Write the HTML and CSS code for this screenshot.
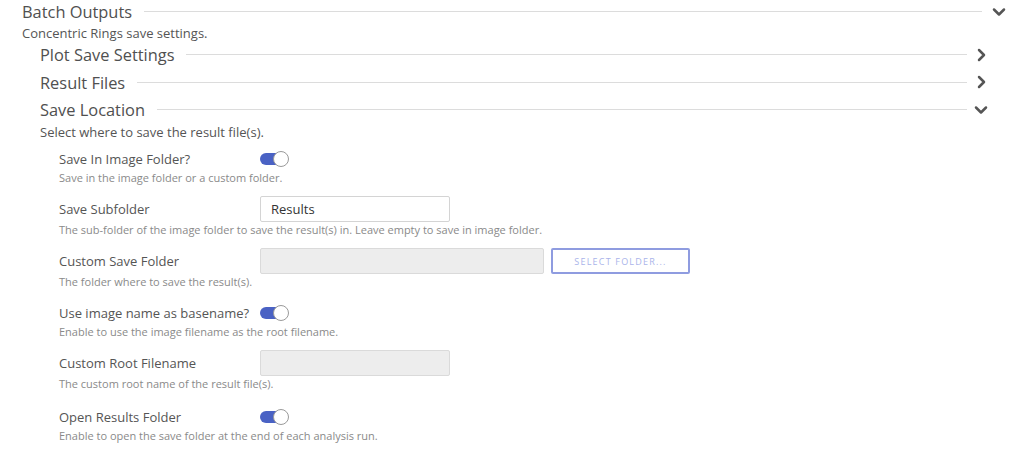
FILE: index.html
```html
<!DOCTYPE html>
<html>
<head>
<meta charset="utf-8">
<link rel="stylesheet" href="styles.css">
</head>
<body>
<div class="panel">
  <div class="header outer">
    <span class="title">Batch Outputs</span>
    <span class="rule"></span>
    <svg class="chev" width="14" height="14" viewBox="0 0 14 14"><path d="M2 4.5 L7 9.5 L12 4.5" fill="none" stroke="#555" stroke-width="2.5" stroke-linecap="round" stroke-linejoin="round"/></svg>
  </div>
  <div class="desc-main">Concentric Rings save settings.</div>
  <div class="inner">
    <div class="header">
      <span class="title">Plot Save Settings</span>
      <span class="rule"></span>
      <svg class="chev" width="14" height="14" viewBox="0 0 14 14"><path d="M5 2 L10 7 L5 12" fill="none" stroke="#555" stroke-width="2.5" stroke-linecap="round" stroke-linejoin="round"/></svg>
    </div>
    <div class="header">
      <span class="title">Result Files</span>
      <span class="rule"></span>
      <svg class="chev" width="14" height="14" viewBox="0 0 14 14"><path d="M5 2 L10 7 L5 12" fill="none" stroke="#555" stroke-width="2.5" stroke-linecap="round" stroke-linejoin="round"/></svg>
    </div>
    <div class="header">
      <span class="title">Save Location</span>
      <span class="rule"></span>
      <svg class="chev" width="14" height="14" viewBox="0 0 14 14"><path d="M2 4.5 L7 9.5 L12 4.5" fill="none" stroke="#555" stroke-width="2.5" stroke-linecap="round" stroke-linejoin="round"/></svg>
    </div>
    <div class="desc-main sub">Select where to save the result file(s).</div>

    <div class="fields">
      <div class="field">
        <div class="row toggle-row">
          <span class="label">Save In Image Folder?</span>
          <span class="toggle"><span class="knob"></span></span>
        </div>
        <div class="help">Save in the image folder or a custom folder.</div>
      </div>
      <div class="field">
        <div class="row">
          <span class="label">Save Subfolder</span>
          <div class="input">Results</div>
        </div>
        <div class="help">The sub-folder of the image folder to save the result(s) in. Leave empty to save in image folder.</div>
      </div>
      <div class="field">
        <div class="row">
          <span class="label">Custom Save Folder</span>
          <div class="input wide disabled"></div>
          <div class="btn">SELECT FOLDER...</div>
        </div>
        <div class="help">The folder where to save the result(s).</div>
      </div>
      <div class="field gap-2">
        <div class="row toggle-row">
          <span class="label">Use image name as basename?</span>
          <span class="toggle"><span class="knob"></span></span>
        </div>
        <div class="help">Enable to use the image filename as the root filename.</div>
      </div>
      <div class="field">
        <div class="row">
          <span class="label">Custom Root Filename</span>
          <div class="input disabled"></div>
        </div>
        <div class="help">The custom root name of the result file(s).</div>
      </div>
      <div class="field gap-4">
        <div class="row toggle-row">
          <span class="label">Open Results Folder</span>
          <span class="toggle"><span class="knob"></span></span>
        </div>
        <div class="help">Enable to open the save folder at the end of each analysis run.</div>
      </div>
    </div>
  </div>
</div>
</body>
</html>
```

FILE: styles.css
```css
html, body {
  margin: 0;
  padding: 0;
  background: #ffffff;
}
body {
  font-family: "Open Sans", "Noto Sans", sans-serif;
  color: #555;
}
.panel {
  padding: 0 18px 0 22px;
}
.header {
  display: flex;
  align-items: center;
  height: 26px;
  margin-bottom: 1.5px;
}
.header.outer {
  height: 23px;
}
.title {
  font-size: 16.4px;
  color: #505050;
  white-space: nowrap;
}
.rule {
  flex: 1;
  height: 1px;
  background: #dcdcdc;
  margin: 0 10px 0 12px;
}
.inner .rule {
  margin-right: 7px;
}
.chev {
  flex: none;
  display: block;
}
.desc-main {
  font-size: 13px;
  line-height: 16px;
  color: #555;
  margin: 1px 0 1px;
}
.inner {
  padding: 0 18px 0 18px;
}
.desc-main.sub {
  margin-top: 0;
}
.fields {
  display: flex;
  flex-direction: column;
  padding-left: 19px;
  margin-top: 8px;
}
.field {
  margin-bottom: 11px;
}
.field.gap-2 { margin-top: 2px; }
.field.gap-4 { margin-top: 4px; }
.row {
  display: flex;
  align-items: center;
  height: 26px;
}
.row.toggle-row {
  height: 22px;
}
.label {
  width: 201px;
  flex: none;
  font-size: 13px;
  color: #555;
  white-space: nowrap;
}
.help {
  font-size: 11px;
  line-height: 14px;
  color: #8a8a8a;
  margin-top: 1px;
  white-space: nowrap;
}
.toggle {
  position: relative;
  display: inline-block;
  width: 29px;
  height: 16px;
  flex: none;
}
.toggle::before {
  content: "";
  position: absolute;
  left: 0;
  top: 2px;
  width: 26px;
  height: 12px;
  border-radius: 6px;
  background: #4a62c4;
}
.knob {
  position: absolute;
  right: 0;
  top: 0;
  width: 14px;
  height: 14px;
  border-radius: 50%;
  background: #fff;
  border: 1px solid #9a9a9a;
}
.input {
  box-sizing: border-box;
  width: 190px;
  height: 26px;
  border: 1px solid #d4d4d4;
  border-radius: 2px;
  font-size: 13px;
  color: #333;
  padding: 0 10px;
  display: flex;
  align-items: center;
  background: #fff;
}
.input.wide {
  width: 284px;
}
.input.disabled {
  background: #ededed;
  border-color: #dadada;
}
.btn {
  box-sizing: border-box;
  margin-left: 7px;
  width: 139px;
  height: 26px;
  border: 2px solid #8f9ce0;
  border-radius: 2px;
  display: flex;
  align-items: center;
  justify-content: center;
  font-size: 9px;
  letter-spacing: 1.2px;
  color: #aab4ea;
}
```
